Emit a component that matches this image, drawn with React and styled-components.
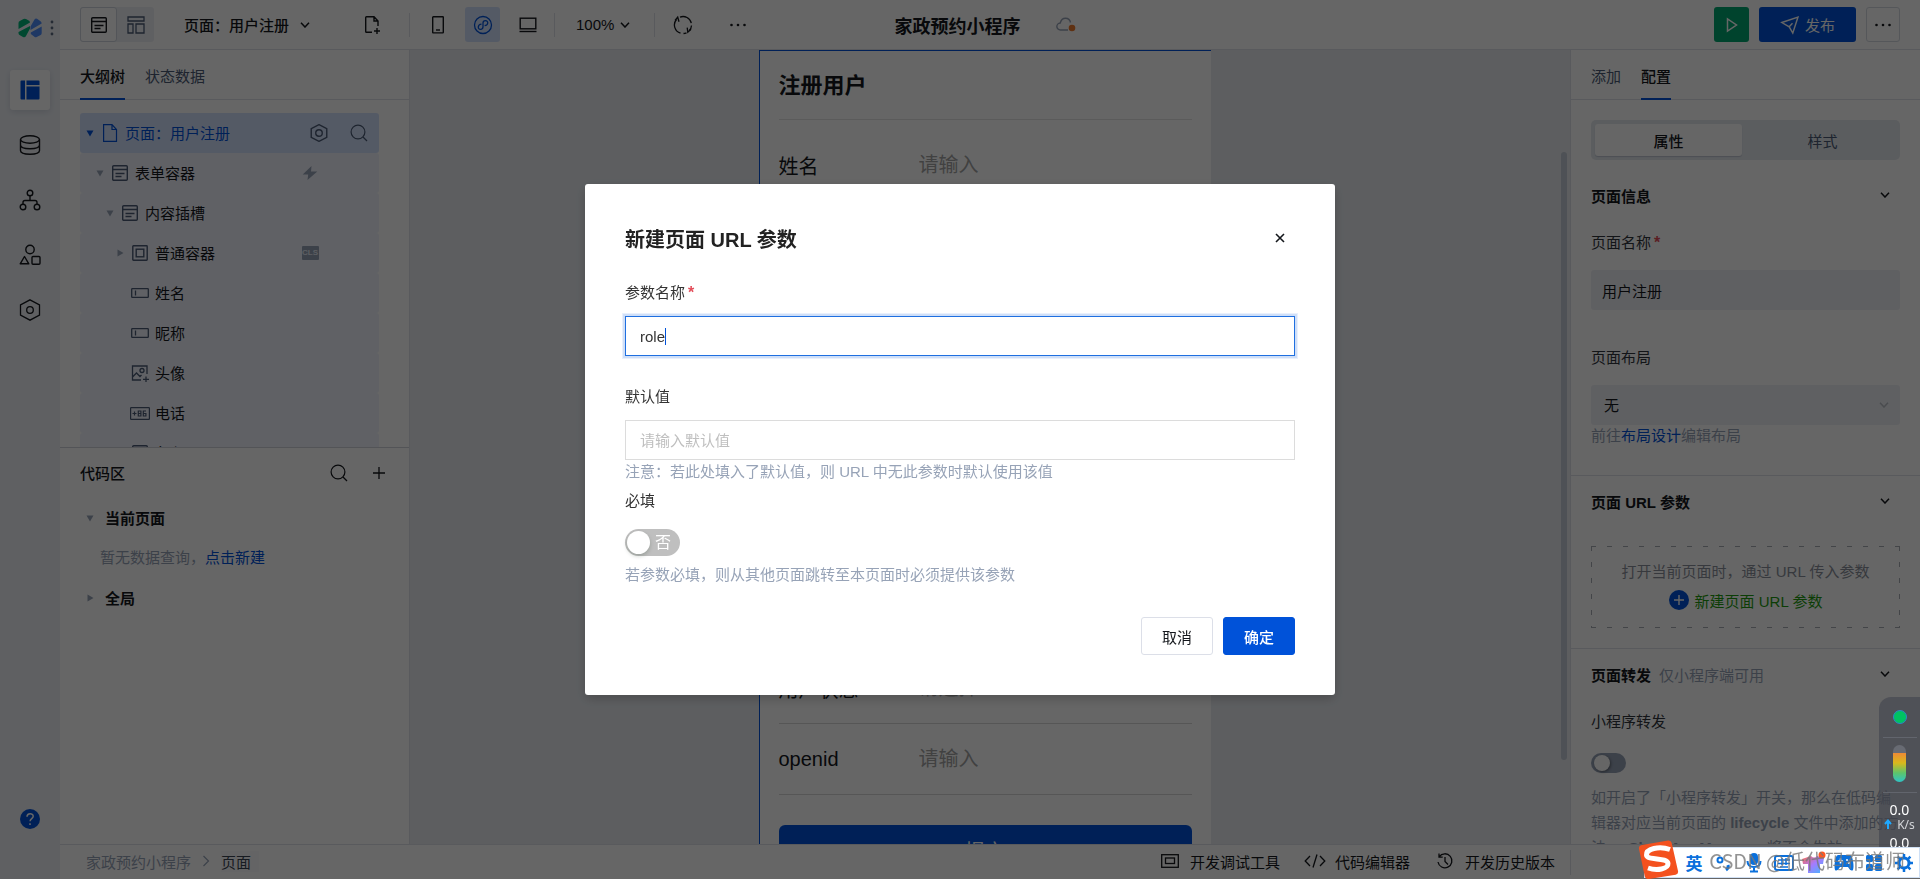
import React from "react";
import styled, { createGlobalStyle, css } from "styled-components";

const c = {
  blue: "#0052d9",
  ink: "#14171c",
  sub: "#4b5b76",
  muted: "#97a3b7",
  line: "#dfe2e8",
  rail: "#eef1f6",
  field: "#eef1f6",
  soft: "#f0f3fc",
  active: "#d3e2fd",
};

const Global = createGlobalStyle`
  * { box-sizing: border-box; }
  body { margin: 0; overflow: hidden; }
  body, button, input, select {
    font-family: "Liberation Sans", "Noto Sans CJK SC", sans-serif;
    font-size: 15px;
    color: ${c.ink};
  }
  h1, h2, h3, p, ul { margin: 0; padding: 0; font-size: 15px; }
  ul { list-style: none; }
  a { color: ${c.blue}; text-decoration: none; }
  button { border: 0; background: none; padding: 0; display: flex; align-items: center; justify-content: center; flex: none; }
  svg { display: block; flex: none; }
`;

/* ---------- icons ---------- */
const Svg = ({ w = 20, h = w, sw = 1.4, children, ...rest }) => (
  <svg width={w} height={h} viewBox={`0 0 ${w} ${h}`} fill="none" stroke="currentColor" strokeWidth={sw} aria-hidden="true" {...rest}>
    {children}
  </svg>
);
const Logo = () => (
  <Svg w={24} h={20} stroke="none">
    <path fill="#00b578" d="M.5 5q0-1.500 1.300-2L5.500 1Q6.500.5 8 1l3.500 2L12 4.500.5 11zM.5 14L12 8v2.500L8 18q-1 1.800-3 1L1.500 17q-1-.6-1-2z" />
    <path fill="#4f8df9" d="M12.500 8.500l4-7Q17.500 0 19 .8l3.500 2.400q1.200.8 1.200 2.300L12.500 12zM23.700 8.500V15q0 1.300-1 2l-4 2q-1 .5-2 0L12.800 16v-1.500z" />
  </Svg>
);
const Chevron = ({ size = 10, color }) => (
  <Svg w={size} h={6} sw={1.5} color={color}><path d={`M1 .8L${size / 2} 5L${size - 1} .8`} /></Svg>
);
const FormIcon = () => (
  <Svg w={16} sw={1.4}><rect x=".7" y=".7" width="14.600" height="14.600" rx="1" /><path d="M.7 4.500h14.600M3.500 8.500h9M3.500 11.500h6" /></Svg>
);
const LayoutIcon = () => (
  <Svg w={18} sw={1.3}><path d="M1 1h16v4H1zM1 8h5v9H1zM9 8h8v9H9z" /></Svg>
);
const FilePlus = () => (
  <Svg w={18}><path d="M8 16.300H2.500q-.8 0-.8-.8v-14q0-.8.800-.8H10l4 4.300v5M10 1v4h4M13 12v6M10 15h6" /></Svg>
);
const FileIcon = () => (
  <Svg w={16} h={18} sw={1.2}><path d="M1.600.6H10l4.500 4.900v11.900H1.600zM10 .6v4.900h4.500" /></Svg>
);
const Phone = () => <Svg w={12} h={18}><rect x=".7" y=".7" width="10.600" height="16.200" rx=".6" /><path d="M4 14h4" /></Svg>;
const Mini = () => (
  <Svg w={20} sw={1.3}><circle cx="10" cy="10" r="8.500" /><path d="M8.500 9.200C4.500 9.500 4.300 14.300 7.600 14.300c1.500 0 2.400-1 2.400-2.500V8c0-1.500 1-2.400 2.400-2.400 3.300 0 3.200 4.700-.8 5.100" /></Svg>
);
const Laptop = () => <Svg w={18} h={16}><rect x="1.200" y="1.200" width="15.600" height="10.600" /><path d="M.5 14.500h17" /></Svg>;
const Refresh = () => (
  <Svg w={20} sw={1.3}><path d="M7.500 18.200A8.500 8.500 0 0 1 3.500 4.500M7 2.100a8.500 8.500 0 0 1 11.300 6M18.500 10.500a8.500 8.500 0 0 1-2.200 5.200M13.500 17.800a8.500 8.500 0 0 1-3 .7" /><path d="M2 5.500l2.700-3.300L6 6.800M18 14.300l-3.200 2.900-.6-4.500" /></Svg>
);
const Dots = () => <Svg w={18} h={4} stroke="none" fill="currentColor"><circle cx="2.500" cy="2" r="1.300" /><circle cx="9" cy="2" r="1.300" /><circle cx="15.500" cy="2" r="1.300" /></Svg>;
const VDots = () => <Svg w={4} h={18} stroke="none" fill="#5d6b82"><circle cx="2" cy="3" r="1.400" /><circle cx="2" cy="9" r="1.400" /><circle cx="2" cy="15" r="1.400" /></Svg>;
const Cloud = () => (
  <Svg w={20} h={16} sw={1.4} color={c.muted}>
    <path d="M12 13H4.500a3.500 3.500 0 0 1-.3-7C5 3 7 1.200 9.500 1.200c2.600 0 4.500 1.600 5 4.300" /><circle cx="16" cy="11" r="3.300" fill="#ed7b2f" stroke="none" />
  </Svg>
);
const Play = () => <Svg w={12} h={16} sw={1.5}><path d="M1.500 2v12L10.500 8z" /></Svg>;
const Send = () => <Svg w={20} h={20}><path d="M1.800 7.500L18 2l-5.200 16-3.600-6.200zM9.200 11.800l3.300-3.600" /></Svg>;
const Panels = () => <Svg w={20} stroke="none" fill={c.blue}><path d="M1.500.5H5v19H1.500q-1 0-1-1v-17q0-1 1-1zM6.500.5h12q1 0 1 1V5h-13zM6.500 6.500h13v12q0 1-1 1h-12z" /></Svg>;
const Db = () => <Svg w={22}><ellipse cx="11" cy="5.500" rx="9.500" ry="3.800" /><path d="M1.500 5.500v11c0 5 19 5 19 0v-11M1.500 11c0 5 19 5 19 0" /></Svg>;
const Branch = () => <Svg w={22}><circle cx="11" cy="4" r="2.800" /><circle cx="4" cy="18" r="2.800" /><circle cx="18" cy="18" r="2.800" /><path d="M11 7v4.500M4 15v-1.500q0-2 2-2h10q2 0 2 2V15" /></Svg>;
const Shapes = () => <Svg w={22}><circle cx="11" cy="5.500" r="4.200" /><path d="M5.500 12.500l4.300 7.300H1.200z" strokeLinejoin="round" /><rect x="13" y="12.500" width="8" height="7.800" rx="1" /></Svg>;
const Hex = ({ w = 22 }) => (
  <svg width={w} height={w} viewBox="0 0 22 22" fill="none" stroke="currentColor" strokeWidth={w < 20 ? 1.7 : 1.3} aria-hidden="true"><path d="M11 .8l9.500 5v10.400l-9.500 5-9.500-5V5.800z" /><circle cx="11" cy="11" r={w < 20 ? 4 : 3.300} /></svg>
);
const Search = () => <Svg w={18} sw={1.2}><circle cx="8" cy="8" r="6.900" /><path d="M13 13l4 4" /></Svg>;
const Plus = () => <Svg w={12} sw={1.3}><path d="M6 0v12M0 6h12" /></Svg>;
const Help = () => <Svg w={20} sw={1.5}><circle cx="10" cy="10" r="10" fill={c.blue} stroke="none" /><path d="M7 7.800c0-4 6.200-4 6.200-.5 0 2.300-3.100 2.400-3.100 5M10 14.300v1.600" stroke="#fff" /></Svg>;
const Caret = ({ open }) => <Svg w={8} stroke="none" fill="currentColor"><path d={open ? "M.5 1.500h7L4 7.500z" : "M1.500 .5v7L7.500 4z"} /></Svg>;
const Box = () => <Svg w={16}><rect x=".8" y=".8" width="14.400" height="14.400" rx=".6" /><rect x="4.200" y="4.200" width="7.600" height="7.600" /></Svg>;
const InputIcon = () => <Svg w={18} h={10} sw={1.3}><rect x=".7" y=".7" width="16.600" height="8.600" rx=".6" /><path d="M4.500 2.500v5" /></Svg>;
const ImageIcon = () => <Svg w={18} sw={1.3}><path d="M16 10V2H1.500v14H10M1.500 13l4-4 3.500 3.500 1.500-1.500M15 12.500v5.500M12 15.300h6" /><circle cx="11" cy="6.500" r="2" /></Svg>;
const TelIcon = () => <Svg w={20} h={13} sw={1.2}><rect x=".6" y=".6" width="18.800" height="11.800" rx=".6" /><path d="M2.500 6.500h4M4.500 4.500v4M8.300 4h2.600v5H8.300zM8.300 6.500h2.600M16 4h-2.700v5h2.600V6.500h-2.600" /></Svg>;
const Bolt = () => <Svg w={16} stroke="none" fill={c.muted}><path d="M9.500 1L.7 9.500h5.500L5.500 15l9.800-8.500H9z" /></Svg>;
const Cross = () => <Svg w={10} sw={1.6}><path d="M1 1l8 8M9 1L1 9" /></Svg>;
const AddDot = () => <Svg w={20} sw={1.4}><circle cx="10" cy="10" r="10" fill={c.blue} stroke="none" /><path d="M10 5v10M5 10h10" stroke="#fff" /></Svg>;
const Tools = () => <Svg w={18} h={14} sw={1.3}><rect x=".7" y=".7" width="16.600" height="12.600" /><rect x="4.500" y="4" width="9" height="5.500" /></Svg>;
const Code = () => <Svg w={22} h={14} sw={1.3}><path d="M6 2L1.200 7 6 12M16 2l4.800 5L16 12M13 .5L9 13.500" /></Svg>;
const History = () => <Svg w={18} h={18} sw={1.3}><path d="M3.200 4.700A7 7 0 1 1 2 10M3 1.500v3.700h3.700M9 5v4.500l3 3" /></Svg>;
const Right = () => <Svg w={8} h={12} sw={1.2}><path d="M1.500 1l5 5-5 5" /></Svg>;

/* ---------- shell ---------- */
const Shell = styled.div`display: flex; height: 100vh; background: #fff;`;
const Rail = styled.nav`width: 60px; flex: none; background: ${c.rail}; display: flex; flex-direction: column; align-items: center; gap: 15px; padding-bottom: 40px;`;
const Brand = styled.div`height: 55px; width: 60px; display: flex; align-items: center; justify-content: flex-end; gap: 8px; padding-right: 6px;`;
const RailButton = styled.button`
  width: 40px; height: 40px; border-radius: 3px;
  ${(p) => p.$active && css`background: #fff; box-shadow: 0 2px 6px rgba(40, 60, 100, .15);`}
`;
const RailHelp = styled.button`margin-top: auto; width: 40px; height: 40px;`;
const Main = styled.div`flex: 1; min-width: 0; display: flex; flex-direction: column;`;
const Header = styled.header`height: 50px; flex: none; border-bottom: 1px solid ${c.line}; display: grid; grid-template-columns: 1fr auto 1fr; align-items: center; padding-right: 20px;`;
const HeaderLeft = styled.div`display: flex; align-items: center; height: 35px; padding-left: 20px;`;
const Modes = styled.div`display: flex; width: 74px; height: 35px; background: ${c.field}; border-radius: 3px; margin-right: 30px;`;
const Mode = styled.button`width: 37px; height: 35px; color: ${c.sub}; border-radius: 3px; ${(p) => p.$on && css`background: #fff; color: ${c.ink}; border: 1px solid #cfd5de;`}`;
const PageName = styled.button`gap: 11px; font-weight: 500; margin-right: 49px;`;
const Tool = styled.button`width: ${(p) => p.$w || 35}px; height: 35px; border-radius: 3px; ${(p) => p.$on && css`background: ${c.active}; color: ${c.blue};`}`;
const Rule = styled.i`width: 1px; height: 24px; background: ${c.line}; margin: 0 ${(p) => p.$r}px 0 ${(p) => p.$l}px; flex: none;`;
const Devices = styled.div`display: flex; gap: 10px;`;
const Zoom = styled.button`gap: 6px;`;
const AppName = styled.h1`display: flex; align-items: center; gap: 35px; font-size: 18px; font-weight: 700; padding-right: 10px; margin-left: 20px;`;
const HeaderRight = styled.div`display: flex; justify-content: flex-end; gap: 10px;`;
const Action = styled.button`width: ${(p) => p.$w}px; height: 35px; border-radius: 3px; gap: 5px; color: #fff; background: ${(p) => p.$bg};`;
const More = styled.button`width: 34px; height: 35px; border-radius: 3px; border: 1px solid #d5dae2;`;

const Body = styled.div`flex: 1; min-height: 0; display: flex;`;
const Left = styled.aside`width: 350px; flex: none; border-right: 1px solid ${c.line}; display: flex; flex-direction: column;`;
const Half = styled.section`flex: 1 1 0; min-height: 0; overflow: hidden; & + & { border-top: 1px solid #cfd3da; }`;
const Tabs = styled.div`display: flex; gap: 20px; height: 50px; padding: 0 20px; border-bottom: 1px solid ${c.line};`;
const Tab = styled.button`height: 50px; color: ${c.sub}; ${(p) => p.$on && css`color: ${c.ink}; font-weight: 500; box-shadow: inset 0 -2px ${c.blue};`}`;
const Tree = styled.ul`padding: 13px 30px 0 20px;`;
const Node = styled.li`
  height: 40px; display: flex; align-items: center; border-radius: 3px; background: ${c.soft};
  padding-left: ${(p) => p.$depth * 10}px;
  ${(p) => p.$on && css`background: ${c.active}; color: ${c.blue};`}
`;
const Slot = styled.span`width: ${(p) => p.$w || 20}px; display: flex; justify-content: center; flex: none; color: ${(p) => p.$color || "inherit"};`;
const NodeName = styled.span`flex: 1; padding: 0 0 2px 5px;`;
const Mark = styled.span`width: 40px; margin-right: 49px; display: flex; justify-content: center;`;
const Cls = styled.span`width: 17px; height: 14px; border-radius: 1px; background: ${c.muted}; color: #e6ebf5; font-size: 8px; font-weight: 700; line-height: 14px; text-align: center;`;
const CodeHead = styled.div`display: flex; align-items: center; height: 50px; padding: 0 10px 0 20px; h2 { flex: 1; font-weight: 500; }`;
const CodeGroup = styled.h3`height: 40px; display: flex; align-items: center; gap: 5px; padding-left: 20px; font-weight: 700;`;
const Empty = styled.p`height: 40px; line-height: 40px; padding-left: 40px; color: ${c.muted};`;

const Canvas = styled.main`flex: 1; min-width: 0; background: #e9ecf1; display: flex; overflow: hidden;`;
const Stage = styled.div`flex: 1; min-width: 0; display: flex; justify-content: center; align-items: flex-start;`;
const Track = styled.div`width: 11px; flex: none; padding: 102px 3px 0 2px;`;
const Thumb = styled.div`height: 608px; border-radius: 3px; background: #c3cad6;`;
const Device = styled.form`width: 452px; padding: 20px 19px; background: #fff; border: solid ${c.blue}; border-width: 1px 0 0 1px;`;
const FormTitle = styled.h2`font-size: 22px; line-height: 30px; padding-bottom: 18px; border-bottom: 1px solid #e3e3e3; margin-bottom: 10px;`;
const FormRow = styled.label`display: flex; align-items: center; height: ${(p) => (p.$tall ? 97 : 71)}px; border-bottom: 1px solid #d8d8d8; font-size: 20px; span { width: 140px; }`;
const RowInput = styled.input`border: 0; background: none; padding: 0; flex: 1; min-width: 0; font-size: 20px; &::placeholder { color: #a3a3a3; }`;
const Submit = styled.button`width: 100%; height: 50px; margin-top: 30px; border-radius: 6px; background: ${c.blue}; color: #fff; font-size: 20px;`;

const Config = styled.aside`width: 350px; flex: none; border-left: 1px solid ${c.line}; overflow: hidden;`;
const Section = styled.section`padding: ${(p) => p.$pad}; & + & { border-top: 1px solid ${c.line}; }`;
const Segment = styled.div`display: flex; height: 40px; padding: 4px; border-radius: 5px; background: #e4e8ee; margin-bottom: 20px;`;
const SegmentItem = styled.button`
  flex: 1; padding-left: 7px; color: ${c.sub}; border-radius: 3px;
  ${(p) => p.$on && css`flex: 0 0 147px; padding: 0; background: #fff; color: ${c.ink}; font-weight: 500; box-shadow: 0 1px 1px rgba(40, 60, 100, .2);`}
`;
const SectionHead = styled.h3`height: 30px; display: flex; align-items: center; gap: 8px; font-weight: 700; padding-right: 10px; small { font-size: 15px; font-weight: 400; color: ${c.muted}; } svg { margin-left: auto; }`;
const FieldLabel = styled.label`display: block; line-height: 26px; margin: ${(p) => p.$m}; color: #30353d;`;
const Req = styled.span`color: #e34d59; margin-left: 3px; font-size: 16px; font-weight: 700; line-height: 16px;`;
const fieldBox = css`width: 100%; height: 40px; border: 0; border-radius: 3px; background: ${c.field}; display: block;`;
const TextField = styled.input`${fieldBox} padding: 0 11px;`;
const SelectWrap = styled.div`position: relative; svg { position: absolute; right: 11px; top: 17px; }`;
const Select = styled.select`${fieldBox} appearance: none; padding: 0 13px;`;
const Hint = styled.p`line-height: ${(p) => p.$lh || 22}px; margin-bottom: ${(p) => p.$mb || 0}px; color: ${c.muted};`;
const dashX = "repeating-linear-gradient(90deg, #a9adb5 0 5px, transparent 5px 16px)";
const dashY = "repeating-linear-gradient(180deg, #a9adb5 0 5px, transparent 5px 16px)";
const Dashed = styled.div`
  margin-top: 30px; height: 82px; padding: 12px 0; display: flex; flex-direction: column; align-items: center; line-height: 28px; color: #8a909b;
  background: ${dashX} 0 0 / 100% 1px no-repeat, ${dashX} 0 100% / 100% 1px no-repeat, ${dashY} 0 0 / 1px 100% no-repeat, ${dashY} 100% 0 / 1px 100% no-repeat;
`;
const AddParam = styled.button`height: 28px; gap: 6px; color: #1f9c10;`;
const MiniSwitch = styled.input`
  appearance: none; display: block; width: 35px; height: 20px; margin: 0 0 12px; border-radius: 10px; background: ${c.muted}; padding: 2px 3px;
  &::before { content: ""; display: block; width: 16px; height: 16px; border-radius: 50%; background: #fff; box-shadow: 1px 1px 3px rgba(0, 0, 0, .4); }
`;

const Footer = styled.footer`height: 35px; flex: none; border-top: 1px solid ${c.line}; display: flex; align-items: center;`;
const Crumbs = styled.div`flex: 1; display: flex; align-items: center; gap: 11px; padding: 0 0 2px 26px; color: ${c.muted}; b { font-weight: 400; color: #3b4454; background: #fafbfc; padding-right: 8px; }`;
const DevTools = styled.div`display: flex; gap: 24px; height: 25px; padding-right: 15px; margin-right: 349px; border-right: 1px solid ${c.line};`;
const DevTool = styled.button`height: 23px; gap: 9px;`;

/* ---------- dialog ---------- */
const Mask = styled.div`position: fixed; inset: 0; background: rgba(0, 0, 0, .6); display: flex; align-items: center; justify-content: center;`;
const Dialog = styled.div`width: 750px; padding: 39px 40px 40px; background: #fff; border-radius: 3px; box-shadow: 0 4px 12px rgba(0, 0, 0, .2);`;
const DialogHead = styled.div`height: 30px; display: flex; align-items: center; justify-content: space-between; margin-bottom: 27px; color: #222; h2 { font-size: 20px; }`;
const Close = styled.button`width: 30px; height: 30px;`;
const DLabel = styled.label`display: block; line-height: 26px; color: #333;`;
const DField = styled.div`position: relative; margin: 10px 0 ${(p) => p.$mb}px;`;
const DInput = styled.input`
  display: block; width: 100%; height: 40px; padding: 0 14px; border: 1px solid #dcdcdc; color: #333;
  &::placeholder { color: #bfbfbf; }
  ${(p) => p.$focus && css`border-color: #1f6fe0; box-shadow: 0 0 0 2px #cfdff8, 0 0 0 3px #e9f0fc;`}
`;
const TextCursor = styled.i`position: absolute; left: 40px; top: 12px; width: 1px; height: 17px; background: ${c.blue};`;
const Toggle = styled.label`
  display: flex; align-items: center; gap: 5px; width: 55px; height: 27px; margin: 15px 0 6px; padding: 0 2px; border-radius: 14px; background: #bfbfbf; color: #fff; font-size: 16px; line-height: 24px;
  input { appearance: none; flex: none; width: 23px; height: 23px; margin: 0; border-radius: 50%; background: #fff; box-shadow: 0 2px 4px rgba(0, 35, 11, .2); }
`;
const DialogFoot = styled.div`display: flex; justify-content: flex-end; gap: 10px; margin-top: 30px;`;
const DButton = styled.button`width: 72px; height: 38px; border-radius: 3px; border: 1px solid ${(p) => (p.$primary ? c.blue : "#dcdfe8")}; ${(p) => p.$primary && css`background: ${c.blue}; color: #fff; font-weight: 500;`}`;

/* ---------- desktop overlays ---------- */
const Monitor = styled.div`position: fixed; right: 0; bottom: 30px; width: 41px; height: 152px; border-radius: 12px 0 0 0; background: rgba(68, 71, 80, .65); color: #fff; display: flex; flex-direction: column; align-items: center; overflow: hidden; font-size: 14px; line-height: 16px; padding-top: 13px;`;
const Split = styled.hr`width: 34px; border: 0; border-top: 1px solid #62656d; margin: ${(p) => p.$t}px 0 ${(p) => p.$b}px;`;
const Led = styled.i`width: 14px; height: 14px; border-radius: 50%; background: #00c261; border: 1px solid #2e86c8; flex: none;`;
const Gauge = styled.i`width: 13px; height: 37px; flex: none; border-radius: 7px; background: linear-gradient(#686b73 0 8px, #ee8a35 8px, #d9b91c 18px, #5cc46c 28px, #2fc3c6);`;
const Speed = styled.span`height: 16px; flex: none; font-family: "Noto Sans", sans-serif;`;
const Unit = styled.span`height: 12px; margin-bottom: 5px; flex: none; display: flex; align-items: center; gap: 5px; font: 12px "Noto Sans", sans-serif; color: #d4d6da;`;
const Ime = styled.div`position: fixed; right: 0; bottom: 1px; height: 31px; width: 276px; background: #fff; border: 1px solid #cfe0f5; display: grid; grid-template-columns: repeat(8, 1fr); align-items: center; justify-items: center; padding-left: 34px; color: #0a70dc; font-size: 17px; font-weight: 700;`;
const SLogo = styled.div`position: fixed; right: 241px; bottom: 0; width: 42px; height: 39px;`;
const Watermark = styled.div`position: fixed; right: 15px; bottom: 3px; font: 20px/30px "Noto Sans CJK SC", sans-serif; color: rgba(120, 120, 120, .8); white-space: nowrap;`;

const nodes = [
  { d: 1, name: "表单容器", icon: <FormIcon />, open: true, mark: <Bolt /> },
  { d: 2, name: "内容插槽", icon: <FormIcon />, open: true },
  { d: 3, name: "普通容器", icon: <Box />, open: false, mark: <Cls>CLS</Cls> },
  { d: 3, name: "姓名", icon: <InputIcon /> },
  { d: 3, name: "昵称", icon: <InputIcon /> },
  { d: 3, name: "头像", icon: <ImageIcon /> },
  { d: 3, name: "电话", icon: <TelIcon /> },
  { d: 3, name: "角色", icon: <FormIcon /> },
];
const rows = [
  ["姓名"], ["昵称"], ["头像", "请上传", true], ["电话"], ["角色"], ["地址"], ["备注"], ["用户状态", "请选择"], ["openid"],
];

export default function App() {
  return (
    <>
      <Global />
      <Shell>
        <Rail>
          <Brand><Logo /><VDots /></Brand>
          <RailButton $active aria-label="页面"><Panels /></RailButton>
          <RailButton aria-label="数据"><Db /></RailButton>
          <RailButton aria-label="流程"><Branch /></RailButton>
          <RailButton aria-label="素材"><Shapes /></RailButton>
          <RailButton aria-label="设置"><Hex /></RailButton>
          <RailHelp aria-label="帮助"><Help /></RailHelp>
        </Rail>
        <Main>
          <Header>
            <HeaderLeft>
              <Modes><Mode $on aria-label="表单"><FormIcon /></Mode><Mode aria-label="布局"><LayoutIcon /></Mode></Modes>
              <PageName>页面：用户注册<Chevron /></PageName>
              <Tool $w={28} aria-label="新建页面"><FilePlus /></Tool>
              <Rule $l={22} $r={10} />
              <Devices>
                <Tool aria-label="手机"><Phone /></Tool>
                <Tool $on aria-label="小程序"><Mini /></Tool>
                <Tool aria-label="电脑"><Laptop /></Tool>
              </Devices>
              <Rule $l={9} $r={21} />
              <Zoom>100%<Chevron /></Zoom>
              <Rule $l={24} $r={10} />
              <Tool aria-label="刷新"><Refresh /></Tool>
              <Tool $w={75} aria-label="更多"><Dots /></Tool>
            </HeaderLeft>
            <AppName>家政预约小程序<Cloud /></AppName>
            <HeaderRight>
              <Action $w={35} $bg="#00a870" aria-label="预览"><Play /></Action>
              <Action $w={97} $bg={c.blue}><Send />发布</Action>
              <More aria-label="更多操作"><Dots /></More>
            </HeaderRight>
          </Header>
          <Body>
            <Left>
              <Half>
                <Tabs><Tab $on>大纲树</Tab><Tab>状态数据</Tab></Tabs>
                <Tree>
                  <Node $depth={0} $on>
                    <Slot><Caret open /></Slot><Slot><FileIcon /></Slot><NodeName>页面：用户注册</NodeName>
                    <Slot $w={40} $color={c.sub}><Hex w={18} /></Slot><Slot $w={40} $color={c.sub}><Search /></Slot>
                  </Node>
                  {nodes.map((n) => (
                    <Node key={n.name} $depth={n.d}>
                      <Slot $color={c.muted}>{n.open !== undefined && <Caret open={n.open} />}</Slot>
                      <Slot $color={c.sub}>{n.icon}</Slot>
                      <NodeName>{n.name}</NodeName>
                      {n.mark && <Mark>{n.mark}</Mark>}
                    </Node>
                  ))}
                </Tree>
              </Half>
              <Half>
                <CodeHead><h2>代码区</h2><Tool $w={40} aria-label="搜索"><Search /></Tool><Tool $w={40} aria-label="添加"><Plus /></Tool></CodeHead>
                <CodeGroup><Slot $color={c.muted}><Caret open /></Slot>当前页面</CodeGroup>
                <Empty>暂无数据查询，<a href="#new">点击新建</a></Empty>
                <CodeGroup><Slot $color={c.muted}><Caret /></Slot>全局</CodeGroup>
              </Half>
            </Left>
            <Canvas>
              <Stage>
                <Device>
                  <FormTitle>注册用户</FormTitle>
                  {rows.map(([label, hint = "请输入", tall]) => (
                    <FormRow key={label} $tall={tall}><span>{label}</span><RowInput placeholder={hint} /></FormRow>
                  ))}
                  <Submit type="button">提交</Submit>
                </Device>
              </Stage>
              <Track><Thumb /></Track>
            </Canvas>
            <Config>
              <Tabs><Tab>添加</Tab><Tab $on>配置</Tab></Tabs>
              <Section $pad="20px 20px 28px">
                <Segment><SegmentItem $on>属性</SegmentItem><SegmentItem>样式</SegmentItem></Segment>
                <SectionHead>页面信息<Chevron /></SectionHead>
                <FieldLabel $m="20px 0 14px" htmlFor="page-name">页面名称<Req>*</Req></FieldLabel>
                <TextField id="page-name" defaultValue="用户注册" />
                <FieldLabel $m="35px 0 14px" htmlFor="page-layout">页面布局</FieldLabel>
                <SelectWrap>
                  <Select id="page-layout"><option>无</option></Select>
                  <Chevron color="#b9bdc5" />
                </SelectWrap>
                <Hint>前往<a href="#layout">布局设计</a>编辑布局</Hint>
              </Section>
              <Section $pad="10px 20px 20px">
                <SectionHead>页面 URL 参数<Chevron /></SectionHead>
                <Dashed>
                  <span>打开当前页面时，通过 URL 传入参数</span>
                  <AddParam><AddDot />新建页面 URL 参数</AddParam>
                </Dashed>
              </Section>
              <Section $pad="10px 20px 0">
                <SectionHead>页面转发<small>仅小程序端可用</small><Chevron /></SectionHead>
                <FieldLabel $m="20px 0 18px" htmlFor="share">小程序转发</FieldLabel>
                <MiniSwitch type="checkbox" id="share" />
                <Hint $lh={25}>如开启了「小程序转发」开关，那么在低码编辑器对应当前页面的 <b>lifecycle</b> 文件中添加的方法 <b>onShareAppMessage</b> 将不会生效</Hint>
              </Section>
            </Config>
          </Body>
          <Footer>
            <Crumbs>家政预约小程序<Right /><b>页面</b></Crumbs>
            <DevTools>
              <DevTool><Slot $w={22}><Tools /></Slot>开发调试工具</DevTool>
              <DevTool><Slot $w={22}><Code /></Slot>代码编辑器</DevTool>
              <DevTool><Slot $w={22}><History /></Slot>开发历史版本</DevTool>
            </DevTools>
          </Footer>
        </Main>
      </Shell>

      <Mask>
        <Dialog role="dialog" aria-modal="true" aria-labelledby="dialog-title">
          <DialogHead><h2 id="dialog-title">新建页面 URL 参数</h2><Close aria-label="关闭"><Cross /></Close></DialogHead>
          <DLabel htmlFor="param-name">参数名称<Req>*</Req></DLabel>
          <DField $mb={28}><DInput id="param-name" $focus defaultValue="role" /><TextCursor /></DField>
          <DLabel htmlFor="param-default">默认值</DLabel>
          <DField $mb={0}><DInput id="param-default" placeholder="请输入默认值" /></DField>
          <Hint $lh={24} $mb={4}>注意：若此处填入了默认值，则 URL 中无此参数时默认使用该值</Hint>
          <DLabel htmlFor="param-required">必填</DLabel>
          <Toggle><input type="checkbox" id="param-required" />否</Toggle>
          <Hint $lh={25}>若参数必填，则从其他页面跳转至本页面时必须提供该参数</Hint>
          <DialogFoot><DButton>取消</DButton><DButton $primary>确定</DButton></DialogFoot>
        </Dialog>
      </Mask>

      <Monitor>
        <Led />
        <Split $t={13} $b={7} />
        <Gauge />
        <Split $t={10} $b={9} />
        <Speed>0.0</Speed>
        <Unit><Svg w={8} h={10} sw={2} stroke="#1fa8ff"><path d="M4 10V2M1 5l3-3.500L7 5" /></Svg>K/s</Unit>
        <Speed>0.0</Speed>
      </Monitor>
      <Ime>
        <span>英</span>
        <Svg w={18} h={20} sw={2}><circle cx="5" cy="7" r="2.500" /><path d="M13 12q1 3-2 5" strokeWidth="3" /></Svg>
        <Svg w={18} h={20} sw={2}><rect x="6" y="1" width="6" height="10" rx="3" fill="currentColor" /><path d="M2.500 8q0 6 6.500 6t6.500-6M9 14v4M5 18.500h8" /></Svg>
        <Svg w={20} h={16} sw={2}><rect x="1" y="1" width="18" height="14" rx="2" /><path d="M4 5h12M4 8.500h12M6 12h8M8 3v7M12 3v7" strokeWidth="1.500" /></Svg>
        <Svg w={24} h={24} stroke="none">
          <defs><linearGradient id="shirt" x1="0" y1="0" x2="1" y2="1"><stop offset="0" stopColor="#ff6a4d" /><stop offset=".5" stopColor="#a57bff" /><stop offset="1" stopColor="#3fb8ff" /></linearGradient></defs>
          <path fill="url(#shirt)" d="M6 6l3-1q3 3 6 0l7 2-1 6h-3v9H6v-9H1L0 8z" /><circle cx="20" cy="4" r="3.500" fill="#ff5722" />
        </Svg>
        <Svg w={20} h={16} stroke="none" fill="currentColor"><path d="M4 0h12q2 0 3 6t0 9q-2 2-5-3H6q-3 5-5 3-1-3 0-9T4 0z" /><path d="M4 6h5M6.500 3.500v5M12 5h2M14 8h2" stroke="#fff" strokeWidth="1.600" /></Svg>
        <Svg w={18} stroke="none" fill="currentColor"><rect x="1" y="1" width="7" height="7" rx="1.500" /><rect x="10" y="1" width="7" height="7" rx="1.500" /><rect x="1" y="10" width="7" height="7" rx="1.500" /><rect x="10" y="10" width="7" height="7" rx="1.500" /></Svg>
        <Svg w={18} sw={3}><circle cx="9" cy="9" r="5" /><path d="M9 0v4M9 14v4M0 9h4M14 9h4M2.600 2.600l3 3M12.400 12.400l3 3M2.600 15.400l3-3M12.400 5.600l3-3" strokeWidth="2.500" /></Svg>
      </Ime>
      <SLogo>
        <Svg w={42} h={39} stroke="none">
          <path fill="#f4511e" d="M5 5L31 .5q3-.4 3.700 2.500L41 31q.6 3-2.400 3.800L12 39q-3.500.4-4.200-2.600L2 9Q1.500 5.600 5 5z" />
          <path d="M33 9.500C22 5.500 9 9 9.500 15c.5 6 21 2 21.500 8.500.3 5.500-11 7.500-20 4.500" fill="none" stroke="#fff" strokeWidth="5" />
        </Svg>
      </SLogo>
      <Watermark>CSDN @低代码布道师</Watermark>
    </>
  );
}
